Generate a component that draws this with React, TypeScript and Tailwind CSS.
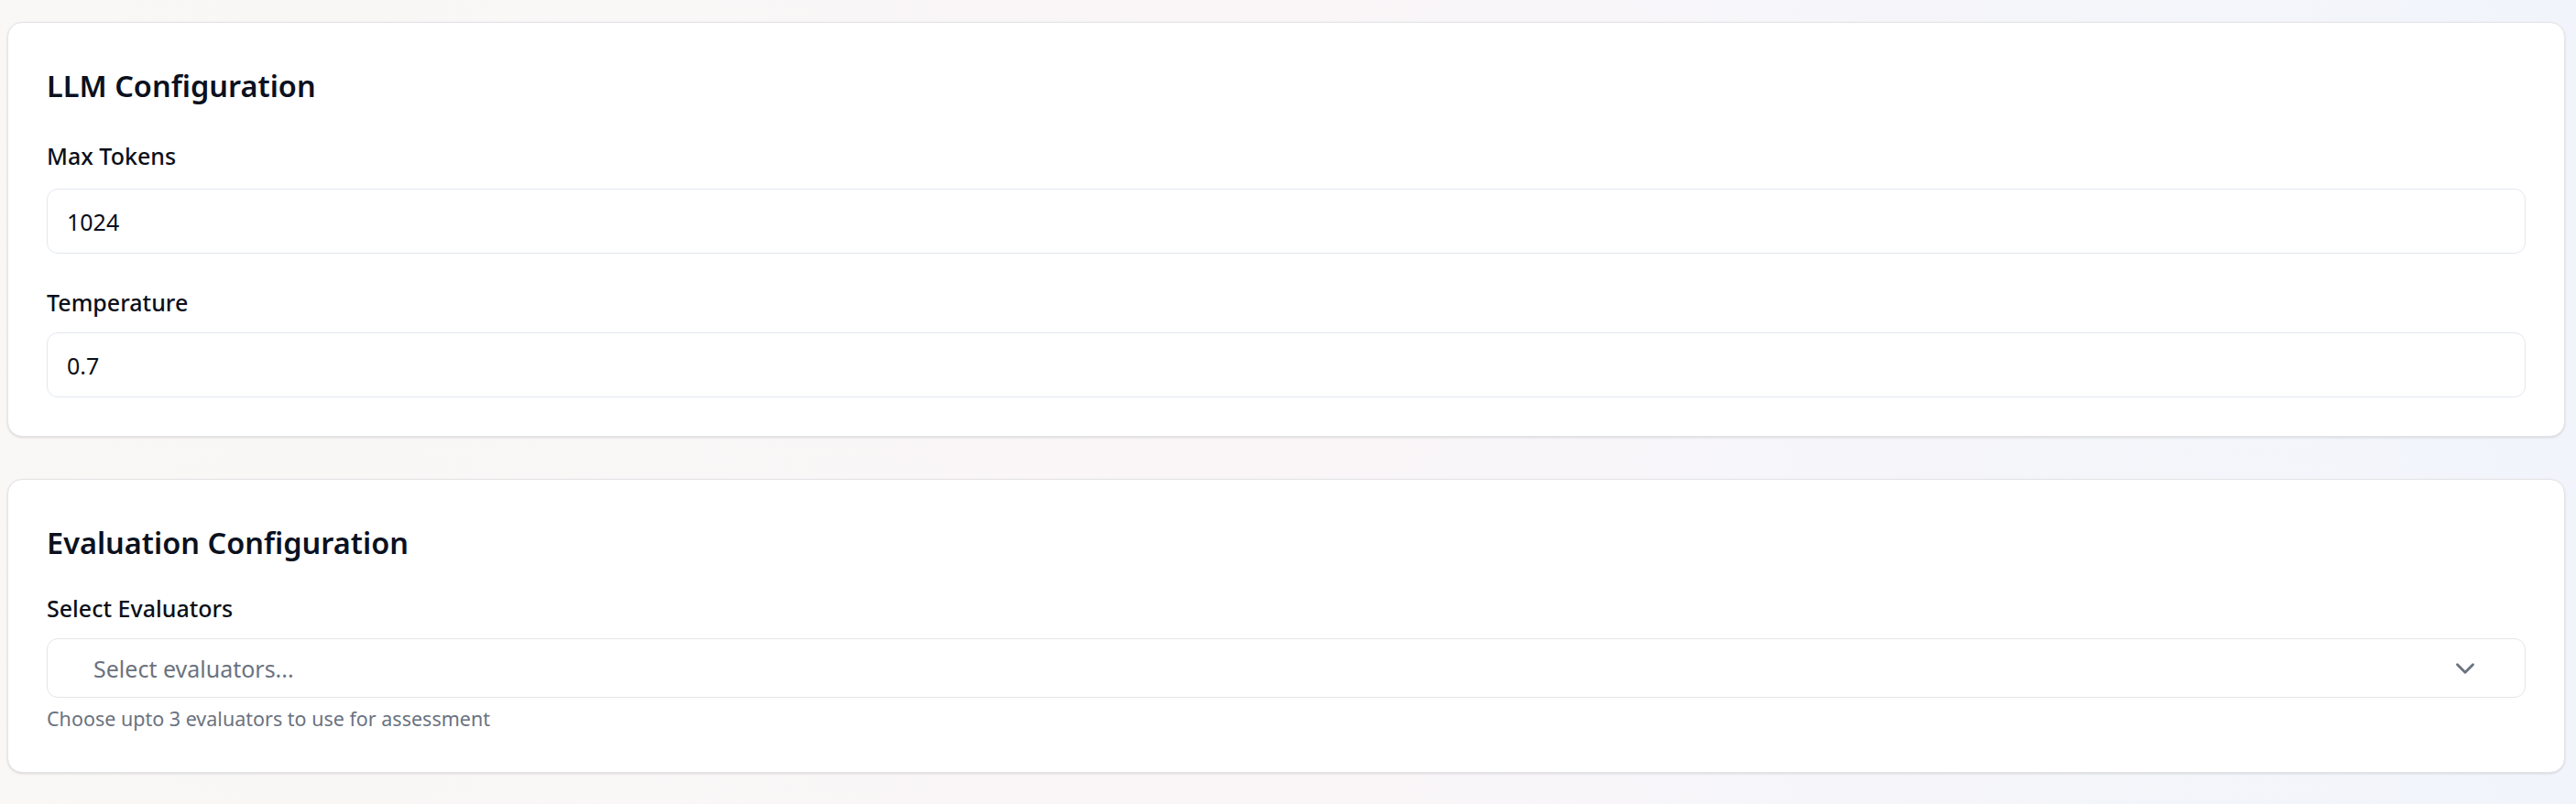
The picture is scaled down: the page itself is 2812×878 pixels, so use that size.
import { ChevronDown } from "lucide-react";

interface FieldProps {
  label: string;
  value: string;
  labelGap: string;
  inputGap: string;
}

function NumberField({ label, value, labelGap, inputGap }: FieldProps) {
  return (
    <div className={labelGap}>
      <label className="block text-[25px] leading-[36px] font-medium text-[#0b0f19]">
        {label}
      </label>
      <div
        className={`${inputGap} h-[71px] flex items-center rounded-xl border border-[#e2e8f0] bg-white px-[21px] text-[25px] leading-[36px] text-[#0b0f19]`}
      >
        {value}
      </div>
    </div>
  );
}

export default function App() {
  return (
    <div
      className="min-h-[878px] w-full bg-gradient-to-r from-[#f9f8f6] via-[#faf6f8] to-[#f1f5fb] pt-[24px] pl-[8px] pr-[12px]"
      style={{ fontFamily: '"Noto Sans", "Open Sans", sans-serif' }}
    >
      {/* LLM config card */}
      <div className="rounded-2xl border border-[#e4e4e7] bg-white shadow-sm px-[42px] pt-[49px] pb-[42px]">
        <h2 className="text-[32.5px] leading-[40px] font-semibold text-[#0b1120]">
          LLM Configuration
        </h2>
        <NumberField
          label="Max Tokens"
          value="1024"
          labelGap="mt-[38px]"
          inputGap="mt-[18px]"
        />
        <NumberField
          label="Temperature"
          value="0.7"
          labelGap="mt-[35px]"
          inputGap="mt-[15px]"
        />
      </div>

      {/* Evaluation config card */}
      <div className="mt-[46px] rounded-2xl border border-[#e4e4e7] bg-white shadow-sm px-[42px] pt-[49px] pb-[43px]">
        <h2 className="text-[32.5px] leading-[40px] font-semibold text-[#0b1120]">
          Evaluation Configuration
        </h2>
        <label className="mt-[33px] block text-[25px] leading-[36px] font-medium text-[#0b0f19]">
          Select Evaluators
        </label>
        <button className="mt-[15px] h-[65px] w-full flex items-center justify-between rounded-xl border border-[#e5e5e5] bg-white pl-[50px] pr-[48px] text-left">
          <span className="text-[25px] leading-[36px] text-[#6b7280]">
            Select evaluators...
          </span>
          <ChevronDown size={34} strokeWidth={2} className="text-[#6b7280]" />
        </button>
        <p className="mt-[8px] text-[21.5px] leading-[30px] text-[#6b7280]">
          Choose upto 3 evaluators to use for assessment
        </p>
      </div>
    </div>
  );
}
